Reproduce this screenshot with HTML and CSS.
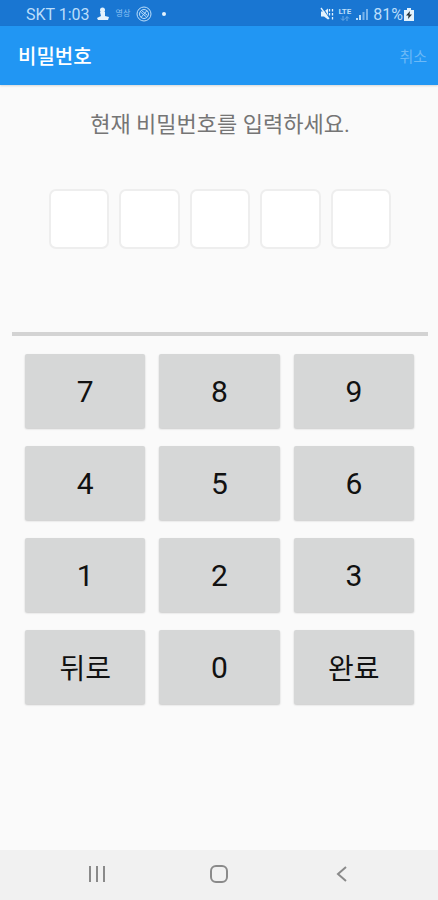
FILE: index.html
```html
<!DOCTYPE html>
<html lang="ko">
<head>
    <meta charset="UTF-8">
    <meta name="viewport" content="width=device-width, initial-scale=1.0">
    <title>비밀번호</title>
    <link rel="stylesheet" href="styles.css">
</head>
<body>

    <div class="status-bar">
        <div class="status-group">
            <span>SKT 1:03</span>
            <svg width="14" height="14" viewBox="0 0 14 14" fill="#e3f2fd">
                <circle cx="6.500" cy="3" r="2.500"/>
                <path d="M4 5h5v4l4 1-1 3H2l-1-2 4-2z"/>
            </svg>
            <span class="tiny-label">영상</span>
            <svg width="16" height="16" viewBox="0 0 16 16" fill="none" stroke="currentColor">
                <circle cx="8" cy="8" r="7"/>
                <circle cx="8" cy="8" r="4.500"/>
                <path d="M4.500 6l6 5M5.500 4.500l6 5M11 4.500l-6 7"/>
            </svg>
            <span class="dot"></span>
        </div>
        <div class="status-group status-right">
            <svg width="14" height="14" viewBox="0 0 14 14" fill="none" stroke="#e3f2fd" stroke-width="1.3">
                <path d="M1 4.500h3l4-3v11l-4-3H1z" fill="#e3f2fd" stroke="none"/>
                <path d="M3 1l7 12" stroke="#1976d2"/>
                <path d="M1 1l8 11"/>
                <path d="M9.500 2v2.500M9.500 6v2.500M12.500 2v2.500M12.500 6v2.500M12.500 10v2.500"/>
            </svg>
            <span class="lte">
                <span>LTE</span>
                <svg width="10" height="5" viewBox="0 0 10 5" fill="none" stroke="currentColor" opacity=".5">
                    <path d="M3 0v4M1 2.500l2 2 2-2M7 5V1M5.500 2.500l1.500-2 2 2"/>
                </svg>
            </span>
            <svg width="14" height="13" viewBox="0 0 14 13" fill="currentColor">
                <path d="M1 10h2v2H1zM4 7h2v5H4z"/>
                <path d="M7.500 4h2v8h-2zM11 1h2v11h-2z" opacity=".6"/>
            </svg>
            <span class="battery">81%<svg width="10" height="13" viewBox="0 0 10 13">
                <path d="M3 0h4v2h3v11H0V2h3z" fill="#e3f2fd"/>
                <path d="M6 3L2 7.500h2.500L4 11l4-4.500H5.500z" fill="#263238"/>
            </svg></span>
        </div>
    </div>

    <header class="app-bar">
        <h1>비밀번호</h1>
        <button type="button" class="cancel">취소</button>
    </header>

    <main>
        <p class="prompt">현재 비밀번호를 입력하세요.</p>

        <div class="pin-row">
            <input type="password" maxlength="1" aria-label="비밀번호 1">
            <input type="password" maxlength="1" aria-label="비밀번호 2">
            <input type="password" maxlength="1" aria-label="비밀번호 3">
            <input type="password" maxlength="1" aria-label="비밀번호 4">
            <input type="password" maxlength="1" aria-label="비밀번호 5">
        </div>

        <hr>

        <div class="keypad">
            <button type="button">7</button>
            <button type="button">8</button>
            <button type="button">9</button>
            <button type="button">4</button>
            <button type="button">5</button>
            <button type="button">6</button>
            <button type="button">1</button>
            <button type="button">2</button>
            <button type="button">3</button>
            <button type="button" class="key-text">뒤로</button>
            <button type="button">0</button>
            <button type="button" class="key-text">완료</button>
        </div>
    </main>

    <nav class="nav-bar">
        <button type="button" aria-label="최근 앱">
            <svg width="20" height="20" viewBox="0 0 20 20">
                <path d="M3 2v16M10 2v16M17 2v16"/>
            </svg>
        </button>
        <button type="button" aria-label="홈">
            <svg width="20" height="20" viewBox="0 0 20 20">
                <rect x="2" y="2" width="16" height="16" rx="5"/>
            </svg>
        </button>
        <button type="button" aria-label="뒤로 가기">
            <svg width="20" height="20" viewBox="0 0 20 20">
                <path d="M15 3l-8 7 8 7"/>
            </svg>
        </button>
    </nav>

</body>
</html>
```
FILE: styles.css
```css
* {
    box-sizing: border-box;
}
body {
    margin: 0;
    min-height: 100vh;
    display: flex;
    flex-direction: column;
    background: #fafafa;
    font-family: Roboto, 'Noto Sans CJK KR', sans-serif;
}
button {
    font-family: inherit;
    border: none;
    padding: 0;
    cursor: pointer;
}
.status-bar {
    height: 26px;
    padding: 2px 24px 0 26px;
    display: flex;
    justify-content: space-between;
    align-items: center;
    background: #1976d2;
    color: #bbdefb;
    font-size: 16px;
}
.status-group {
    display: flex;
    align-items: center;
    gap: 6px;
}
.status-right { gap: 4px; }
.tiny-label {
    font-size: 8px;
    line-height: 12px;
    color: #90c4f3;
}
.dot {
    width: 4px;
    height: 4px;
    margin-left: 4px;
    border-radius: 50%;
    background: #e3f2fd;
}
.lte {
    display: flex;
    flex-direction: column;
    align-items: center;
    font-size: 8px;
    font-weight: bold;
    line-height: 8px;
}
.battery {
    display: flex;
    align-items: center;
    gap: 1px;
}
.app-bar {
    height: 59px;
    padding: 0 11px 0 18px;
    display: flex;
    justify-content: space-between;
    align-items: center;
    background: #2196f3;
    box-shadow: 0 1px 2px rgba(0,0,0,0.15);
}
.app-bar h1 {
    margin: 0;
    font-size: 20px;
    font-weight: 500;
    color: white;
}
.cancel {
    background: none;
    font-size: 15px;
    color: #6bb9f7;
}
main {
    flex: 1;
    padding: 24px 10px 24px 12px;
}
.prompt {
    margin: 0;
    font-size: 22px;
    line-height: 32px;
    text-align: center;
    color: #757575;
}
.pin-row {
    display: flex;
    gap: 10px;
    margin: 48px 37px 83px;
}
.pin-row input {
    flex: 1;
    min-width: 0;
    height: 60px;
    border: 2px solid #eeeeee;
    border-radius: 7px;
    background: white;
    font-size: 28px;
    text-align: center;
    outline: none;
}
hr {
    height: 4px;
    margin: 0;
    border: none;
    background: #d3d3d3;
}
.keypad {
    display: grid;
    grid-template-columns: repeat(3, 1fr);
    gap: 18px 14px;
    margin: 18px 14px 0 13px;
}
.keypad button {
    height: 74px;
    border-radius: 2px;
    background: #d6d7d7;
    box-shadow: 0 1px 2px rgba(0,0,0,0.2);
    font-size: 30px;
    color: #111111;
}
.keypad .key-text { font-size: 28px; }
.nav-bar {
    height: 50px;
    padding: 0 36px 2px;
    display: flex;
    background: #f1f1f1;
}
.nav-bar button {
    flex: 1;
    display: flex;
    justify-content: center;
    align-items: center;
    background: none;
}
.nav-bar svg {
    fill: none;
    stroke: #8a8a8a;
    stroke-width: 2;
}
```
